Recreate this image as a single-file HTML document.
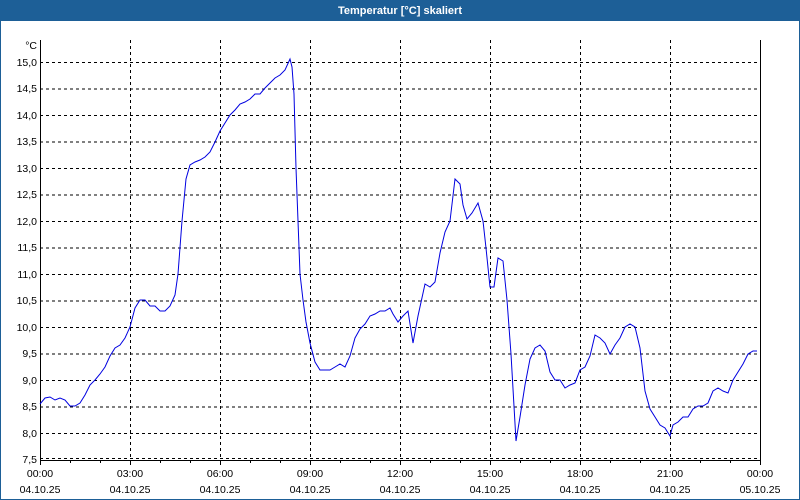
<!DOCTYPE html>
<html><head><meta charset="utf-8"><style>
html,body{margin:0;padding:0;width:800px;height:500px;overflow:hidden;background:#fff}
svg{display:block}
text{font-family:"Liberation Sans",sans-serif;font-size:10.5px;fill:#000}
</style></head><body>
<svg width="800" height="500" viewBox="0 0 800 500">
<rect x="0" y="0" width="800" height="500" fill="#1d5f97"/>
<rect x="1" y="21" width="798" height="478" fill="#fff"/>
<text x="400" y="14" text-anchor="middle" style="fill:#fff;font-weight:bold;font-size:11px">Temperatur [°C] skaliert</text>
<g stroke="#000" stroke-width="1" stroke-dasharray="3,3" fill="none" shape-rendering="crispEdges">
<path d="M40 62.5H760M40 89H760M40 115.5H760M40 142H760M40 168.5H760M40 195H760M40 221.5H760M40 248H760M40 274.5H760M40 301H760M40 327.5H760M40 354H760M40 380.5H760M40 407H760M40 433.5H760M40 458.5H760"/>
<path d="M130.5 40V460M220.5 40V460M310.5 40V460M400.5 40V460M490.5 40V460M580.5 40V460M670.5 40V460"/>
</g>
<g stroke="#000" stroke-width="1" fill="none" shape-rendering="crispEdges">
<path d="M40.5 40V460.5H760.5V40"/>
<path d="M40.5 460V465M70.5 460V463M100.5 460V463M130.5 460V465M160.5 460V463M190.5 460V463M220.5 460V465M250.5 460V463M280.5 460V463M310.5 460V465M340.5 460V463M370.5 460V463M400.5 460V465M430.5 460V463M460.5 460V463M490.5 460V465M520.5 460V463M550.5 460V463M580.5 460V465M610.5 460V463M640.5 460V463M670.5 460V465M700.5 460V463M730.5 460V463M760.5 460V465"/>
</g>
<g text-anchor="end">
<text x="37" y="49">°C</text>
<text x="37" y="66">15,0</text><text x="37" y="92">14,5</text><text x="37" y="119">14,0</text><text x="37" y="145">13,5</text><text x="37" y="172">13,0</text><text x="37" y="198">12,5</text><text x="37" y="225">12,0</text><text x="37" y="251">11,5</text><text x="37" y="278">11,0</text><text x="37" y="304">10,5</text><text x="37" y="331">10,0</text><text x="37" y="357">9,5</text><text x="37" y="384">9,0</text><text x="37" y="410">8,5</text><text x="37" y="437">8,0</text><text x="37" y="463">7,5</text>
</g>
<g text-anchor="middle">
<text x="40" y="477">00:00</text><text x="130" y="477">03:00</text><text x="220" y="477">06:00</text><text x="310" y="477">09:00</text><text x="400" y="477">12:00</text><text x="490" y="477">15:00</text><text x="580" y="477">18:00</text><text x="670" y="477">21:00</text><text x="760" y="477">00:00</text>
<text x="40" y="493">04.10.25</text><text x="130" y="493">04.10.25</text><text x="220" y="493">04.10.25</text><text x="310" y="493">04.10.25</text><text x="400" y="493">04.10.25</text><text x="490" y="493">04.10.25</text><text x="580" y="493">04.10.25</text><text x="670" y="493">04.10.25</text><text x="760" y="493">05.10.25</text>
</g>
<polyline fill="none" stroke="#0000e0" stroke-width="1" points="40,404 45,398 50,397 55,400 60,398 65,400 70,406 75,406 80,403 85,395 90,385 95,380 100,374 105,367 110,356 115,348 120,345 125,338 130,327 135,308 140,300 145,300 150,306 155,306 160,311 165,311 170,306 175,295 178,274 182,221 186,179 190,165 195,162 200,160 205,157 210,152 215,142 220,131 225,123 230,115 235,110 240,104 245,102 250,99 255,94 260,94 265,88 270,83 275,78 280,75 285,70 290,59 292,67 294,94 296,168 298,221 300,274 303,300 306,322 310,343 315,362 320,370 325,370 330,370 335,367 340,364 345,367 350,356 355,338 360,329 365,324 370,316 375,314 380,311 385,311 390,308 393,314 398,322 403,316 408,311 413,343 418,316 425,284 430,287 435,282 440,253 445,232 450,221 455,179 460,184 463,205 467,219 472,213 478,203 483,221 486,248 490,287 494,287 498,258 503,261 507,300 511,354 516,441 520,417 525,385 530,359 535,348 540,345 545,351 550,372 555,380 560,380 565,388 570,385 575,383 580,370 585,367 590,356 595,335 600,338 605,343 610,354 615,345 620,338 625,327 630,324 635,327 640,348 645,391 650,409 655,417 660,425 665,428 670,436 673,425 678,422 683,417 688,417 693,409 698,406 703,406 708,403 713,391 718,388 723,391 728,393 733,380 738,372 743,364 748,354 753,351 757,351"/>
</svg>
</body></html>
